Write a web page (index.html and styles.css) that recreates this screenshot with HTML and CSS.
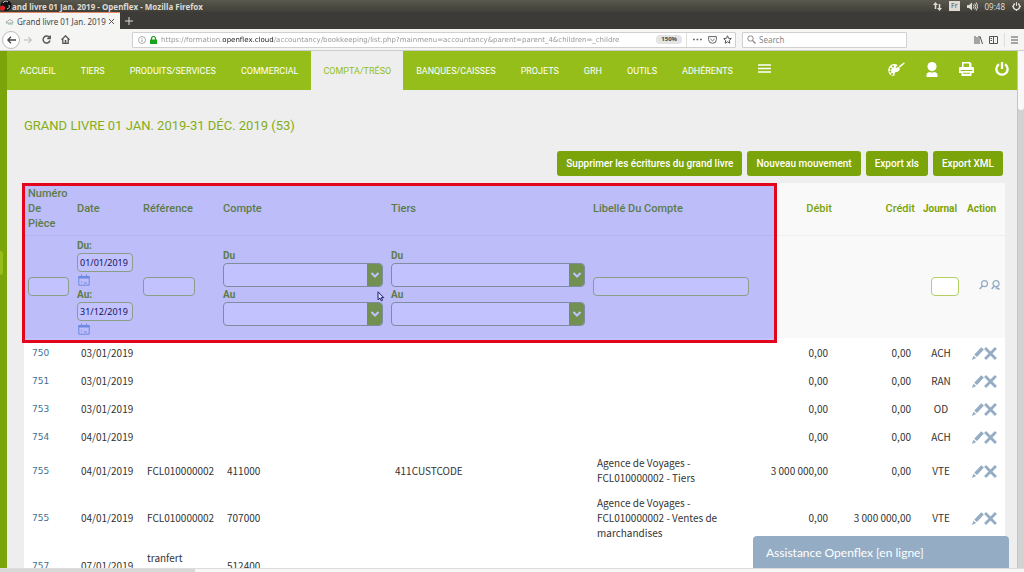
FILE: index.html
```html
<!DOCTYPE html>
<html lang="fr">
<head>
<meta charset="utf-8">
<title>Grand livre 01 Jan. 2019 - Openflex</title>
<link rel="stylesheet" href="styles.css">
</head>
<body>
<svg class="defs" aria-hidden="true">
  <symbol id="pencil" viewBox="0 0 13 13"><path d="M10.200.3 12.900 2.500 6 10 3.200 7.700zM2.500 8.700l2.700 2.200L.8 13z"/></symbol>
  <symbol id="cross" viewBox="0 0 12 12"><path d="M1 1 11 11M11 1 1 11" fill="none" stroke="currentColor" stroke-width="2.600"/></symbol>
  <symbol id="chevron" viewBox="0 0 10 8"><path d="M1.500 2 5 5.500 8.500 2" fill="none" stroke="currentColor" stroke-width="2"/></symbol>
  <symbol id="calendar" viewBox="0 0 12 12"><path d="M.8 2.500h10.400v8.700H.8z" fill="none" stroke="currentColor"/><path d="M.5 2h11v2.500H.5zM3 .5h1v2H3zM8 .5h1v2H8zM3 7.500h1.200v1H3zM6 8.500h3v1H6z"/></symbol>
</svg>

<header class="titlebar">
  <svg class="app-icon" viewBox="0 0 12 12"><circle cx="6" cy="5.500" r="5.500" fill="#111"/><path d="M3 3a3 3 0 0 1 5-1M9 5a3 3 0 0 1-2 4" fill="none" stroke="#ddd"/><circle cx="2.500" cy="8" r="2.500" fill="#e02020"/></svg>
  <span class="window-title">and livre 01 Jan. 2019 - Openflex - Mozilla Firefox</span>
  <div class="tray">
    <svg width="9" height="9" viewBox="0 0 9 9"><path d="M2.500 0 5 3H3.300v4H1.700V3H0zM6.500 9 4 6h1.700V2h1.600v4H9z"/></svg>
    <span class="lang">Fr</span>
    <svg width="11" height="9" viewBox="0 0 11 9"><path d="M0 3h2l3-2.500v8L2 6H0z"/><path d="M6.300 2.500q1.500 2 0 4M7.800 1.500q2.300 3 0 6M9.300.5q3 4 0 8" fill="none" stroke="currentColor"/></svg>
    <span>09:48</span>
    <svg width="9" height="9" viewBox="0 0 9 9"><path d="M3 1.600a3.200 3.200 0 1 0 3 0" fill="none" stroke="currentColor" stroke-width="1.500"/><path d="M4 0h1v4H4zM0 4h1.500v1H0zM7.500 4H9v1H7.500zM4 7.500h1V9H4z"/></svg>
  </div>
</header>
<div class="tabs">
  <div class="tab">
    <svg width="9" height="7" viewBox="0 0 9 7"><path d="M1 5q0-2 2-2 1-2 3-1t2 3z" fill="none" stroke="#aaa"/><path d="M3 6h5" stroke="#8bb"/></svg>
    <span>Grand livre 01 Jan. 2019</span>
    <button class="tab-close" aria-label="Fermer"><svg width="5" height="5" viewBox="0 0 5 5"><path d="m0 0 5 5M5 0 0 5" stroke="#555"/></svg></button>
  </div>
  <button class="tab-new" aria-label="Nouvel onglet"><svg width="8" height="8" viewBox="0 0 8 8"><path d="M4 0v8M0 4h8" stroke="#ddd"/></svg></button>
</div>
<div class="toolbar">
  <button class="back" aria-label="Précédent"><svg width="9" height="8" viewBox="0 0 9 8"><path d="M9 4H1M4 .7.8 4 4 7.300" fill="none" stroke="#444" stroke-width="1.300"/></svg></button>
  <button aria-label="Suivant"><svg width="8" height="8" viewBox="0 0 9 8"><path d="M0 4h8M5 .7 8.200 4 5 7.300" fill="none" stroke="#bbb" stroke-width="1.200"/></svg></button>
  <button aria-label="Actualiser"><svg width="9" height="9" viewBox="0 0 9 9"><path d="M7.500 2.500A3.500 3.500 0 1 0 8 5.500M8.200.5v3H5.200" fill="none" stroke="#555" stroke-width="1.400"/></svg></button>
  <button aria-label="Accueil"><svg width="9" height="9" viewBox="0 0 9 9"><path d="M.5 4.700 4.500.8l4 3.900M1.800 4v4.300h5.400V4" fill="none" stroke="#555" stroke-width="1.300"/><path d="M3.700 5h1.600v3H3.700z" fill="#555"/></svg></button>
  <div class="address">
    <svg width="8" height="8" viewBox="0 0 8 8"><circle cx="4" cy="4" r="3.500" fill="none" stroke="#999" stroke-width=".8"/><path d="M4 3.500V6M4 2v.8" stroke="#999"/></svg>
    <svg width="7" height="8" viewBox="0 0 7 8"><path d="M0 3.500h7V8H0z" fill="#19a319"/><path d="M1.500 4V2.500a2 2 0 0 1 4 0V4" fill="none" stroke="#19a319" stroke-width="1.200"/></svg>
    <span class="url">https://formation.<b>openflex.cloud</b>/accountancy/bookkeeping/list.php?mainmenu=accountancy&amp;parent=parent_4&amp;children=_childre</span>
    <span class="zoom">150%</span>
    <span class="sep"></span>
    <svg width="9" height="3" viewBox="0 0 9 3"><path d="M0 .7h1.800v1.600H0zM3.500.7h1.800v1.600H3.500zM7 .7h1.800v1.600H7z" fill="#666"/></svg>
    <svg width="9" height="8" viewBox="0 0 9 8"><path d="M.6.6h7.800v3q0 3.700-3.900 3.700T.6 3.600zM2.500 3l2 1.800 2-1.800" fill="none" stroke="#666"/></svg>
    <svg width="9" height="9" viewBox="0 0 9 9"><path d="m4.500.8 1.100 2.500 2.700.3-2 1.900.5 2.700-2.300-1.400-2.300 1.400.5-2.700-2-1.900 2.700-.3z" fill="none" stroke="#555"/></svg>
  </div>
  <label class="search">
    <svg width="9" height="9" viewBox="0 0 9 9"><circle cx="3.500" cy="3.500" r="2.700" fill="none" stroke="#888"/><path d="m5.500 5.500 3 3" stroke="#888" stroke-width="1.200"/></svg>
    <input type="text" placeholder="Search" aria-label="Search">
  </label>
  <div class="tools">
    <svg width="9" height="8" viewBox="0 0 9 8"><path d="M1 0v8M3 1v7M5 0v8M6 .3 8.500 8" fill="none" stroke="#555"/></svg>
    <svg width="9" height="8" viewBox="0 0 9 8"><path d="M.5.5h8v7h-8zM4.500.5v7M1.500 2.500H3M1.500 4.500H3" fill="none" stroke="#555"/></svg>
    <span class="sep"></span>
    <svg width="7" height="8" viewBox="0 0 7 8"><path d="M0 1h7M0 4h7M0 7h7" stroke="#555"/></svg>
  </div>
</div>

<div class="viewport">
  <aside class="side"><span class="handle"></span></aside>
  <div class="page">
    <nav class="menu">
      <a href="#">ACCUEIL</a><a href="#">TIERS</a><a href="#">PRODUITS/SERVICES</a><a href="#">COMMERCIAL</a><a href="#" class="active">COMPTA/TRÉSO</a><a href="#">BANQUES/CAISSES</a><a href="#">PROJETS</a><a href="#">GRH</a><a href="#">OUTILS</a><a href="#">ADHÉRENTS</a>
      <button class="burger" aria-label="Menu"><svg width="13" height="9" viewBox="0 0 13 9"><path d="M0 1h13M0 4.500h13M0 8h13" stroke="#fff" stroke-width="1.500"/></svg></button>
      <div class="user-tools">
        <button aria-label="Thème"><svg width="17" height="15" viewBox="0 0 17 15"><path fill-rule="evenodd" d="M6 2C2 2.500 0 5.500.3 9c.3 3 2.700 5 5.200 4.800 1.800-.2.800-1.600 1.200-2.800.5-1.500 2.500-.7 4-2C12.200 7.700 12 6 11 5L9 7 7.500 5.500 9.600 3C8.700 2.200 7.500 1.800 6 2zM5 3.500a1 1 0 1 0 .1 0zM2.800 5.800a1 1 0 1 0 .1 0zM2.300 8.500a1 1 0 1 0 .1 0zM4 11a1 1 0 1 0 .1 0z"/><path d="M7.800 7.800Q7.500 5.500 9.800 5l1.500 1.200Q10.500 8.300 7.800 7.800zM10.500 4.500 15.800.6q1-.2.800.8l-4.600 4.200z"/></svg></button>
        <button aria-label="Utilisateur"><svg width="12" height="15" viewBox="0 0 12 15"><ellipse cx="6" cy="4.600" rx="4.600" ry="4.600"/><path d="M.5 15q-.8-4.200 3-5 2.500 1.200 5 0 3.800.8 3 5z"/></svg></button>
        <button aria-label="Imprimer"><svg width="15" height="14" viewBox="0 0 15 14"><path d="M3 0h8l1.500 1.500V5H3zM0 6q0-1 1-1h13q1 0 1 1v5H0z"/><path d="M2.500 8.500h10V14h-10z"/><path d="M4.500 1.500H10V5H4.500zM1.500 8h12v.9h-12zM4 10.800h7v.9H4z" fill="#95be1b"/></svg></button>
        <button aria-label="Déconnexion"><svg width="14" height="14" viewBox="0 0 14 14"><path d="M4 2.300A5.600 5.600 0 1 0 10 2.300M7 0v7" fill="none" stroke="#fff" stroke-width="2.300"/></svg></button>
      </div>
    </nav>
    <main>
      <h1>GRAND LIVRE 01 JAN. 2019-31 DÉC. 2019 (53)</h1>
      <div class="actions">
        <button>Supprimer les écritures du grand livre</button>
        <button>Nouveau mouvement</button>
        <button>Export xls</button>
        <button>Export XML</button>
      </div>
      <div class="ledger">
        <table>
          <colgroup><col class="c-num"><col class="c-date"><col class="c-ref"><col class="c-account"><col class="c-third"><col><col class="c-amount"><col class="c-amount"><col class="c-journal"><col class="c-action"></colgroup>
          <thead>
            <tr class="heads"><th>Numéro De Pièce</th><th>Date</th><th>Référence</th><th>Compte</th><th>Tiers</th><th>Libellé Du Compte</th><th class="num">Débit</th><th class="num">Crédit</th><th class="small">Journal</th><th class="small">Action</th></tr>
            <tr class="filters">
              <td><input type="text" aria-label="Numéro de pièce"></td>
              <td>
                <label for="d1">Du:</label><input class="date" id="d1" type="text" value="01/01/2019"><button class="cal" aria-label="Calendrier"><svg width="12" height="12"><use href="#calendar"/></svg></button>
                <label for="d2">Au:</label><input class="date" id="d2" type="text" value="31/12/2019"><button class="cal" aria-label="Calendrier"><svg width="12" height="12"><use href="#calendar"/></svg></button>
              </td>
              <td><input class="ref" type="text" aria-label="Référence"></td>
              <td>
                <label for="c1">Du</label><div class="select"><select id="c1"><option></option></select><span><svg width="10" height="8"><use href="#chevron"/></svg></span></div>
                <label for="c2">Au</label><div class="select"><select id="c2"><option></option></select><span><svg width="10" height="8"><use href="#chevron"/></svg></span></div>
              </td>
              <td>
                <label for="t1">Du</label><div class="select"><select id="t1"><option></option></select><span><svg width="10" height="8"><use href="#chevron"/></svg></span></div>
                <label for="t2">Au</label><div class="select"><select id="t2"><option></option></select><span><svg width="10" height="8"><use href="#chevron"/></svg></span></div>
              </td>
              <td><input type="text" aria-label="Libellé du compte"></td>
              <td></td><td></td>
              <td><input class="journal" type="text" aria-label="Journal"></td>
              <td class="find"><button aria-label="Rechercher"><svg width="9" height="10" viewBox="0 0 9 10"><circle cx="5.500" cy="3.700" r="3" fill="none" stroke="currentColor" stroke-width="1.300"/><path d="M3.500 6 .7 9" stroke="currentColor" stroke-width="1.600"/></svg></button><button aria-label="Effacer"><svg width="9" height="10" viewBox="0 0 9 10"><circle cx="5" cy="3.700" r="3" fill="none" stroke="currentColor" stroke-width="1.300"/><path d="M3.200 6 .7 9M4.500 7.500l4 1.800" stroke="currentColor" stroke-width="1.600"/></svg></button></td>
            </tr>
          </thead>
          <tbody>
            <tr><td><a href="#">750</a></td><td>03/01/2019</td><td></td><td></td><td></td><td></td><td class="num">0,00</td><td class="num">0,00</td><td class="code">ACH</td><td class="edit"><button aria-label="Modifier"><svg width="13" height="13"><use href="#pencil"/></svg></button><button aria-label="Supprimer"><svg width="13" height="13"><use href="#cross"/></svg></button></td></tr>
            <tr><td><a href="#">751</a></td><td>03/01/2019</td><td></td><td></td><td></td><td></td><td class="num">0,00</td><td class="num">0,00</td><td class="code">RAN</td><td class="edit"><button aria-label="Modifier"><svg width="13" height="13"><use href="#pencil"/></svg></button><button aria-label="Supprimer"><svg width="13" height="13"><use href="#cross"/></svg></button></td></tr>
            <tr><td><a href="#">753</a></td><td>03/01/2019</td><td></td><td></td><td></td><td></td><td class="num">0,00</td><td class="num">0,00</td><td class="code">OD</td><td class="edit"><button aria-label="Modifier"><svg width="13" height="13"><use href="#pencil"/></svg></button><button aria-label="Supprimer"><svg width="13" height="13"><use href="#cross"/></svg></button></td></tr>
            <tr><td><a href="#">754</a></td><td>04/01/2019</td><td></td><td></td><td></td><td></td><td class="num">0,00</td><td class="num">0,00</td><td class="code">ACH</td><td class="edit"><button aria-label="Modifier"><svg width="13" height="13"><use href="#pencil"/></svg></button><button aria-label="Supprimer"><svg width="13" height="13"><use href="#cross"/></svg></button></td></tr>
            <tr><td><a href="#">755</a></td><td>04/01/2019</td><td>FCL010000002</td><td>411000</td><td>411CUSTCODE</td><td>Agence de Voyages -<br>FCL010000002 - Tiers</td><td class="num">3 000 000,00</td><td class="num">0,00</td><td class="code">VTE</td><td class="edit"><button aria-label="Modifier"><svg width="13" height="13"><use href="#pencil"/></svg></button><button aria-label="Supprimer"><svg width="13" height="13"><use href="#cross"/></svg></button></td></tr>
            <tr><td><a href="#">755</a></td><td>04/01/2019</td><td>FCL010000002</td><td>707000</td><td></td><td>Agence de Voyages -<br>FCL010000002 - Ventes de<br>marchandises</td><td class="num">0,00</td><td class="num">3 000 000,00</td><td class="code">VTE</td><td class="edit"><button aria-label="Modifier"><svg width="13" height="13"><use href="#pencil"/></svg></button><button aria-label="Supprimer"><svg width="13" height="13"><use href="#cross"/></svg></button></td></tr>
            <tr><td><a href="#">757</a></td><td>07/01/2019</td><td>tranfert<br>&nbsp;</td><td>512400</td><td></td><td></td><td></td><td></td><td></td><td></td></tr>
          </tbody>
        </table>
        <div class="highlight"></div>
        <svg class="pointer" width="8" height="11" viewBox="0 0 8 11"><path d="M1 .8v8l2-1.700 1.300 2.800 1.200-.6-1.200-2.700h2.500z" fill="#d8d8ff" stroke="#20206a"/></svg>
      </div>
    </main>
    <button class="assist">Assistance Openflex [en ligne]</button>
  </div>
  <div class="scrollbar"><span></span></div>
</div>
<footer class="status"><span></span></footer>
</body>
</html>
```
FILE: styles.css
```css
* { box-sizing: border-box; }
body {
  margin: 0;
  height: 100vh;
  overflow: hidden;
  display: flex;
  flex-direction: column;
  background: #eee;
  font-family: Roboto, sans-serif;
  font-size: 10px;
}
button { border: 0; padding: 0; background: none; font: inherit; color: inherit; display: flex; align-items: center; justify-content: center; }
a { color: inherit; text-decoration: none; }
svg { display: block; flex: none; fill: currentColor; }
.defs { position: absolute; width: 0; height: 0; }

.titlebar, .tabs, .toolbar { flex: none; display: flex; align-items: center; font-family: "Noto Sans", sans-serif; font-size: 8px; }
.titlebar { height: 12px; background: linear-gradient(#59584d, #403f39); color: #dfdbd2; }
.app-icon { width: 12px; height: 12px; }
.window-title { font-weight: bold; white-space: nowrap; }
.tray { margin-left: auto; padding-right: 3px; display: flex; align-items: center; gap: 7px; }
.lang { background: #dfdbd2; color: #555; font-size: 7px; line-height: 10px; padding: 0 2px; }

.tabs { height: 17px; background: #3c3b37; }
.tab { height: 100%; width: 120px; padding: 0 6px 0 5px; display: flex; align-items: center; gap: 3px; background: #f5f5f4; border-top: 1px solid #e58a68; color: #444; white-space: nowrap; }
.tab-close { margin-left: auto; }
.tab-new { margin-left: 5px; }

.toolbar { height: 22px; background: #f5f5f4; border-bottom: 1px solid #ccc; padding: 0 6px 0 2px; gap: 10px; }
.back { width: 18px; height: 18px; border: 1px solid #bbb; border-radius: 50%; background: #fff; }
.toolbar .back { margin-right: -6px; }
.address, .search { height: 16px; background: #fff; border: 1px solid #d0d0d0; border-radius: 1px; display: flex; align-items: center; }
.address { flex: 1; min-width: 0; margin-left: 52px; padding: 0 3px 0 5px; gap: 4px; color: #999; }
.address svg:nth-of-type(n+3) { margin-left: 2px; }
.url { flex: 1; min-width: 0; overflow: hidden; white-space: nowrap; font-family: "DejaVu Sans", sans-serif; font-size: 7px; mask-image: linear-gradient(90deg, #000 94%, transparent); }
.url b { font-weight: normal; color: #222; }
.zoom { background: #e4e4e4; color: #444; border-radius: 4px; padding: 0 5px; font-size: 6px; font-weight: bold; line-height: 9px; }
.sep { width: 1px; height: 14px; background: #ddd; }
.search { width: 165px; margin-left: -4px; padding: 0 4px; gap: 3px; }
.search input { border: 0; padding: 0; width: 100%; font: inherit; background: none; }
.search input::placeholder { color: #888; }
.tools { margin-left: 57px; display: flex; align-items: center; gap: 6px; }

.viewport { flex: 1; min-height: 0; display: flex; }
.side { width: 7px; background: #7ba30a; display: flex; align-items: center; padding-top: 18px; }
.handle { width: 3px; height: 24px; background: #95be1b; border-radius: 0 3px 3px 0; margin-bottom: 112px; }
.page { flex: 1; min-width: 0; position: relative; overflow: hidden; background: #eee; }
.scrollbar { width: 7px; background: #d2d2d2; border-left: 1px solid #c4c4c4; }
.scrollbar span { display: block; height: 59px; background: #f8f8f8; border-radius: 0 0 3px 3px; }
.status { flex: none; height: 4px; background: #f7f7f5; border-top: 1px solid #ddd; }
.status span { display: block; width: 195px; height: 100%; background: #d8d8d8; }

.menu { height: 39px; background: #95be1b; color: #fff; font-size: 9px; display: flex; align-items: stretch; padding-left: 1px; gap: 1px; }
.menu a { display: flex; align-items: center; padding: 0 12px; }
.menu a.active { background: #eee; color: #95be1b; }
.burger { padding: 0 12px 4px; }
.user-tools { margin-left: auto; padding: 0 8px 3px 0; display: flex; align-items: center; gap: 21px; }

main { padding: 26px 12px 0 17px; }
h1 { margin: 0; font-size: 13px; line-height: 20px; font-weight: normal; color: #85ad17; }
.actions { margin: 15px 2px 7px 0; display: flex; justify-content: flex-end; gap: 5px; }
.actions button { height: 25px; padding: 0 9px; border-radius: 3px; background: #7ba30a; color: #fff; font-weight: 500; }
.ledger { position: relative; }
table { width: 100%; table-layout: fixed; border-collapse: collapse; background: #fff; color: #333; line-height: 15px; }
.c-num { width: 49px; }
.c-date { width: 66px; }
.c-ref { width: 80px; }
.c-account { width: 168px; }
.c-third { width: 202px; }
.c-amount { width: 83px; }
.c-journal { width: 44px; }
.c-action { width: 42px; }
thead { background: #f9f9f9; color: #7ba30a; }
th { padding: 0 4px; text-align: left; font-size: 11px; font-weight: 500; }
th.small { font-size: 10px; font-weight: bold; }
.num { text-align: right; }
.heads { height: 52px; border-bottom: 1px solid #eee; }
.filters { height: 103px; }
.filters td { padding: 0 4px; }
.filters label { display: block; font-weight: bold; }
.filters input { display: block; width: 100%; height: 19px; border: 1px solid #b4cf62; border-radius: 4px; background: #fff; padding: 0 2px; font: 9px "Noto Sans", sans-serif; color: #222; }
.filters .date { width: 56px; margin-bottom: 1px; }
.filters .ref { width: 52px; }
.filters .journal { width: 28px; margin-left: auto; }
.cal { height: 14px; margin-left: 1px; color: #8fb4dc; }
.select { display: flex; height: 24px; max-width: 195px; border: 1px solid #a8b880; border-radius: 4px; overflow: hidden; background: #fff; }
.select select { flex: 1; min-width: 0; border: 0; appearance: none; background: none; }
.select span { width: 15px; background: #95be1b; color: #fff; display: flex; align-items: center; justify-content: center; }
.find { color: #94adc5; }
.find button { display: inline-flex; margin-left: 3px; }
.filters .find { padding: 0 5px 0 0; text-align: right; white-space: nowrap; }
tbody { font-family: "Noto Sans CJK SC", sans-serif; }
tbody td { padding: 5px 8px; height: 28px; white-space: nowrap; }
tbody td a { color: #416f96; font-family: "DejaVu Sans", sans-serif; font-size: 9px; }
tbody .code { padding: 0; text-align: center; }
tbody .edit { padding: 0 0 0 8px; color: #94adc5; }
.edit button { display: inline-flex; vertical-align: middle; }
.highlight { position: absolute; top: 0; left: -2px; width: 755px; height: 160px; border: 3px solid #e3051b; background: rgba(0, 0, 255, .24); pointer-events: none; }
.pointer { position: absolute; top: 108px; left: 353px; }
.assist { position: absolute; right: 8px; bottom: 0; width: 256px; height: 32px; padding-left: 13px; justify-content: flex-start; border-radius: 4px 4px 0 0; background: #94adc5; color: #fff; font: 12px Lato, sans-serif; }
```
